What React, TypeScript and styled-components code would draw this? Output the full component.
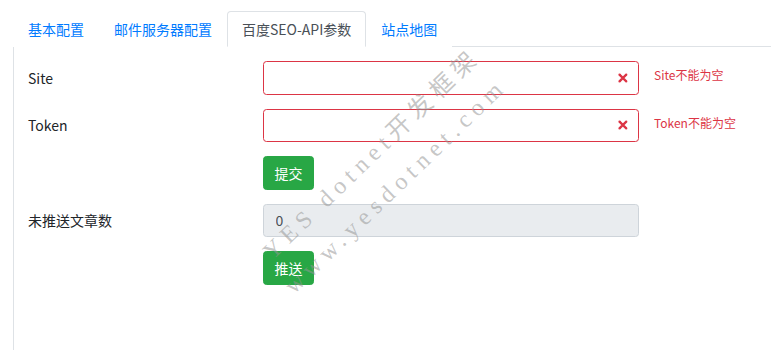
import React from 'react';
import styled, { createGlobalStyle } from 'styled-components';

const GlobalStyle = createGlobalStyle`
  html, body {
    margin: 0;
    padding: 0;
    background: #fff;
  }
  body {
    font-family: "Noto Sans CJK SC", "Noto Sans", sans-serif;
    font-size: 14px;
    color: #212529;
  }
`;

const Page = styled.div`
  position: relative;
  height: 350px;
  overflow: hidden;
  padding: 11px 0 0 13px;
  box-sizing: border-box;
`;

const TabBar = styled.div`
  display: flex;
  border-bottom: 1px solid #dee2e6;
`;

const Tab = styled.div<{ $active?: boolean }>`
  padding: 7px 14px;
  line-height: 20px;
  font-size: 14px;
  margin-bottom: -1px;
  border: 1px solid ${p => (p.$active ? '#dee2e6' : 'transparent')};
  border-bottom-color: ${p => (p.$active ? '#fff' : 'transparent')};
  border-radius: 4px 4px 0 0;
  background: #fff;
  color: ${p => (p.$active ? '#495057' : '#007bff')};
  cursor: pointer;
`;

const Panel = styled.div`
  border-left: 1px solid #dee2e6;
  padding: 14px 0 0 14px;
  height: 400px;
`;

const Row = styled.div`
  display: grid;
  grid-template-columns: 220px 376px 1fr;
  column-gap: 15px;
  margin-bottom: 14px;
`;

const Label = styled.label`
  display: flex;
  align-items: center;
  height: 33.5px;
  font-size: 14px;
`;

const Field = styled.div`
  position: relative;
`;

const Input = styled.input<{ $invalid?: boolean }>`
  display: block;
  width: 100%;
  height: 33.5px;
  box-sizing: border-box;
  padding: 0 30px 0 11.5px;
  font: inherit;
  font-size: 14px;
  color: #495057;
  background: ${p => (p.disabled ? '#e9ecef' : '#fff')};
  border: 1px solid ${p => (p.$invalid ? '#dc3545' : '#ced4da')};
  border-radius: 3.5px;
  outline: none;
`;

const InvalidIcon = styled.svg`
  position: absolute;
  right: 8px;
  top: 50%;
  width: 15.75px;
  height: 15.75px;
  transform: translateY(-50%);
`;

const Feedback = styled.div`
  font-size: 12px;
  line-height: 18px;
  padding-top: 5px;
  color: #dc3545;
`;

const Button = styled.button`
  height: 33.5px;
  padding: 0 10.5px;
  font: inherit;
  font-size: 14px;
  color: #fff;
  background: #28a745;
  border: 1px solid #28a745;
  border-radius: 3.5px;
  justify-self: start;
  cursor: pointer;
`;

const Watermark = styled.div<{ $x: number; $y: number }>`
  position: absolute;
  left: ${p => p.$x}px;
  top: ${p => p.$y}px;
  transform: translate(-50%, -50%) rotate(-44deg);
  white-space: nowrap;
  font-family: "Liberation Serif", "Noto Sans CJK SC", serif;
  font-size: 24px;
  letter-spacing: 6px;
  color: rgba(150, 150, 150, 0.55);
  pointer-events: none;
`;

const XIcon = () => (
  <InvalidIcon viewBox="-2 -2 7 7" fill="#dc3545">
    <path stroke="#dc3545" strokeWidth="1" d="M0 0l3 3m0-3L0 3" />
    <circle r=".5" />
    <circle cx="3" r=".5" />
    <circle cy="3" r=".5" />
    <circle cx="3" cy="3" r=".5" />
  </InvalidIcon>
);

const tabs = ['基本配置', '邮件服务器配置', '百度SEO-API参数', '站点地图'];

export default function App() {
  return (
    <Page>
      <GlobalStyle />
      <TabBar>
        {tabs.map((t, i) => (
          <Tab key={t} $active={i === 2}>
            {t}
          </Tab>
        ))}
      </TabBar>
      <Panel>
        <Row>
          <Label>Site</Label>
          <Field>
            <Input $invalid />
            <XIcon />
          </Field>
          <Feedback>Site不能为空</Feedback>
        </Row>
        <Row>
          <Label>Token</Label>
          <Field>
            <Input $invalid />
            <XIcon />
          </Field>
          <Feedback>Token不能为空</Feedback>
        </Row>
        <Row>
          <span />
          <Button>提交</Button>
        </Row>
        <Row>
          <Label>未推送文章数</Label>
          <Field>
            <Input disabled value="0" readOnly />
          </Field>
        </Row>
        <Row>
          <span />
          <Button>推送</Button>
        </Row>
      </Panel>
      <Watermark $x={370} $y={152}>YES dotnet开发框架</Watermark>
      <Watermark $x={396} $y={186}>www.yesdotnet.com</Watermark>
    </Page>
  );
}
